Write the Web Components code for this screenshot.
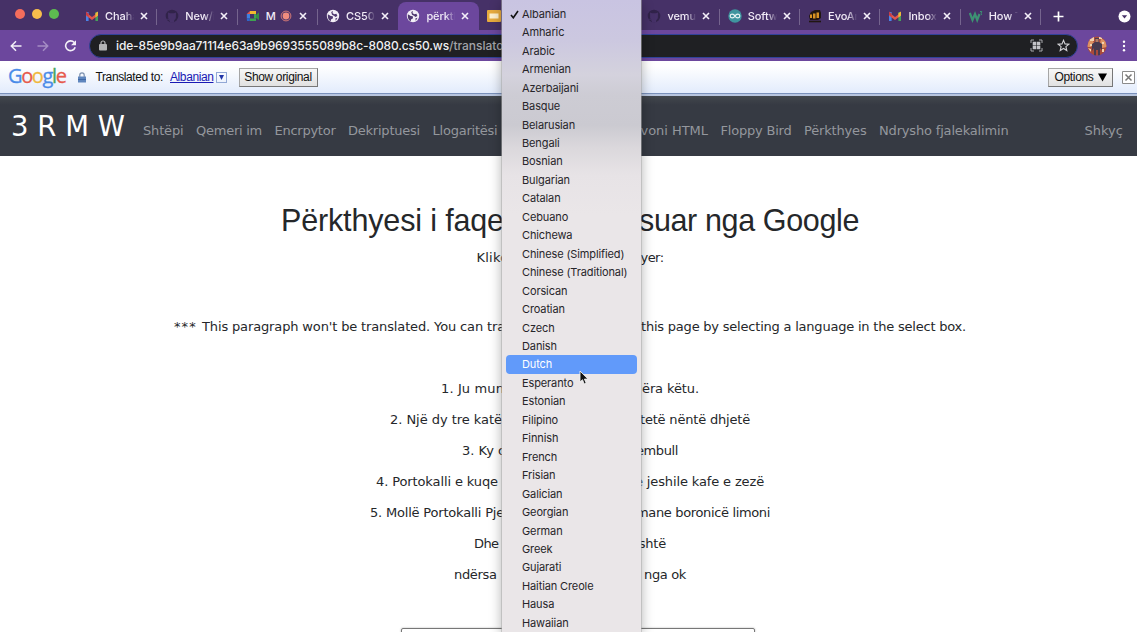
<!DOCTYPE html>
<html lang="sq"><head><meta charset="utf-8"><title>Përkthyes</title>
<style>
html,body{margin:0;height:100%;overflow:hidden;background:#fff}
body{font-family:"Liberation Sans",Arial,sans-serif;color:#212529}
</style></head><body>
<app-window></app-window>
<script>
const define=(name,html,setup)=>customElements.define(name,class extends HTMLElement{
  connectedCallback(){
    if(this.shadowRoot)return;
    const r=this.attachShadow({mode:'open'});
    r.innerHTML=typeof html==='function'?html(this):html;
    if(setup)setup(this,r);
  }
});

/* Text tracked out to a given width */
define('fit-text','<style>:host{display:inline-block;white-space:pre}span{white-space:pre}</style><span><slot></slot></span>',(el,r)=>{
  const w=+el.getAttribute('w'),s=r.querySelector('span');
  el.style.letterSpacing='0';
  const n=s.getBoundingClientRect().width;
  el.style.letterSpacing=((w-n)/el.textContent.length).toFixed(3)+'px';
  el.style.width=w+'px';
});

const icons={
 gmail:'<path d="M1 12V3h2.6v9z" fill="#4a83e8"/><path d="M10.4 12V3H13v9z" fill="#46a05a"/><path d="M1 3.500 7 8l6-4.500V6.500L7 11 1 6.500z" fill="#e2564b"/><path d="M10.400 4.300 13 2.500V6.500l-2.600 2z" fill="#f0b63b"/><path d="M1 2.500 3.600 4.400V8L1 6z" fill="#c83d45"/>',
 github:'<circle cx="7" cy="7" r="6.300" fill="#31234a"/><path d="M4.800 13.500v-2.200C3 10 3 8.500 3.100 6.500L3 3.500l2 .8h4l2-.8-.1 3C11 8.500 11 10 9.200 11.300v2.200z" fill="#463168"/><path d="M2.300 10.300q1.500 0 2.500 1.200" stroke="#463168" fill="none"/>',
 meet:'<path d="M.8 5H4v4.500H.8z" fill="#3f7fe0"/><path d="M4 2h6v3H4z" fill="#f1b82f"/><path d="M.8 9.500h3V12H1z" fill="#2f66c8"/><path d="M4 9.500h6V12H4z" fill="#3da251"/><path d="M10 6l3-2.800v8L10 9z" fill="#358c48"/><path d="M8 5h2v4.500H8z" fill="#3da251"/><path d="M.8 5 4 2v3z" fill="#e45748"/>',
 globe:'<circle cx="7" cy="7" r="6.200" fill="#f2eef6"/><path d="M1.800 5.200 4.800 7l2 .2.2 2-2 1.300-.3 1.900Q1.400 10.500 1.800 5.200M7 2l-.5 2 1.700 1.300 2.200-.6 1 2.200-2 1.200L8.300 7 6 5.800 5.200 3zM9.300 9.500l2.200-.8-1.700 3z" fill="#503a70"/>',
 slides:'<rect x="0" y="1" width="14" height="12" rx="1" fill="#e8ac3e"/><rect x="2.500" y="4.500" width="9" height="5" fill="#fff2cf"/>',
 arduino:'<circle cx="7" cy="7" r="6.700" fill="#3f959f"/><path d="M7 7C5.500 4.200 2.200 4.600 2.200 7s3.300 2.800 4.800 0 4.800-2.400 4.800 0S8.500 9.800 7 7z" fill="none" stroke="#e8f4f4" stroke-width="1.200"/>',
 evo:'<path d="M3 3 7 1h5l1 3v5l-3 2H2L1 7z" fill="#211611"/><path d="M2 5.500h2V9H2zM5 4.500h2.500v5H5zM8.500 3.500H11v5.500H8.500z" fill="#d99223"/><path d="M1 12.500h12" stroke="#211611" stroke-width="1.600"/>',
 w3:'<path d="M.8 4 3.500 11 6 5l2.200 6 2.300-6" fill="none" stroke="#3d9273" stroke-width="2.200"/><path d="M11 2.500h1.800L12 4.200q1.400.8 0 2" fill="none" stroke="#3d9273"/>'
};
define('tab-icon',el=>`<style>:host{display:block;width:14px;height:14px}svg{display:block}</style><svg width="14" height="14" viewBox="0 0 14 14">${icons[el.getAttribute('name')]}</svg>`);

define('browser-tab',el=>`<style>
:host{display:block;box-sizing:border-box;width:80.35px;flex:none;height:30px;padding-top:2px}
.t{height:28px;display:flex;align-items:center;padding-left:8px;box-sizing:border-box;position:relative}
:host([active]) .t{background:#6c479d;border-radius:8px 8px 0 0}
.l{margin-left:6px;width:30px;height:14px;overflow:hidden;white-space:nowrap;font:500 11px/14px Inter,sans-serif;letter-spacing:-.1px;color:#f1ebf7;-webkit-mask-image:linear-gradient(90deg,#000 65%,transparent 97%)}
:host([rec]) .l{width:14px;-webkit-mask-image:none}
.rec{display:none;flex:none;margin-right:6px}:host([rec]) .rec{display:block}
.x{flex:none;margin-left:5px}
:host([rec]) .x{margin-left:1px}
.s{position:absolute;right:0;top:7px;width:1px;height:16px;background:#75648e}
:host([nosep]) .s{display:none}
</style><div class="t"><tab-icon name="${el.getAttribute('icon')}"></tab-icon><div class="l"><slot></slot></div><svg class="rec" width="12" height="12"><circle cx="6" cy="6" r="4.900" fill="none" stroke="#d37876"/><circle cx="6" cy="6" r="3.400" fill="#f08d7e"/></svg><svg class="x" width="8" height="8"><path d="M1 1l6 6M7 1 1 7" stroke="#f4eff9" stroke-width="1.600"/></svg><i class="s"></i></div>`);

define('tab-strip',`<style>:host{display:flex;height:30px;background:#463167;align-items:stretch}
.lights{display:flex;gap:7px;padding-left:15px;width:61px;box-sizing:border-box;align-items:center;height:27px}
.lights i{width:10px;height:10px;border-radius:5px}
.end{flex:1;display:flex;justify-content:space-between;align-items:center;padding:3px 6px 0 12px}
</style><div class="lights"><i style="background:#f46d5c"></i><i style="background:#f7bd4c"></i><i style="background:#5dbb50"></i></div>
<div style="width:16px"></div>
<browser-tab icon="gmail">Chaha</browser-tab><browser-tab icon="github">New/i</browser-tab><browser-tab icon="meet" rec>M</browser-tab><browser-tab icon="globe" nosep>CS50</browser-tab><browser-tab icon="globe" active nosep>përktl</browser-tab><browser-tab icon="slides"></browser-tab><browser-tab icon="slides"></browser-tab><browser-tab icon="github">vemul</browser-tab><browser-tab icon="arduino">Softw</browser-tab><browser-tab icon="evo">EvoAr</browser-tab><browser-tab icon="gmail">Inbox</browser-tab><browser-tab icon="w3">How T</browser-tab>
<div class="end"><svg width="11" height="11"><path d="M5.500.5v10M.5 5.500h10" stroke="#fff" stroke-width="1.700"/></svg><svg width="13" height="13"><circle cx="6.500" cy="6.500" r="6" fill="#fff"/><path d="M3.800 5.200h5.400L6.500 8.500z" fill="#463167"/></svg></div>`);

define('address-bar',`<style>:host{display:flex;height:31px;background:#6c479d;align-items:center;box-sizing:border-box}
.n{display:flex;gap:15px;padding-left:10px;width:89px;box-sizing:border-box}
.pill{width:989px;height:24px;box-sizing:border-box;border:1px solid #31429a;border-radius:12px;background:#1f2023;display:flex;align-items:center;padding:0 7px 0 9px}
.u{margin-left:9px;color:#f0f0f2;font:500 12px Inter,sans-serif;flex:1;white-space:nowrap}.u .p{color:#a3a4a8}
.pill svg{flex:none}
</style><div class="n"><svg width="12" height="12"><path d="M11.500 6H1.500M6 1.300 1.300 6 6 10.700" fill="none" stroke="#f3eff8" stroke-width="1.500"/></svg><svg width="12" height="12"><path d="M.5 6h10M6 1.300 10.700 6 6 10.700" fill="none" stroke="#a48cc4" stroke-width="1.500"/></svg><svg width="13" height="12"><path d="M10.300 2.600A4.900 4.900 0 1 0 11.200 7.300" fill="none" stroke="#f3eff8" stroke-width="1.600"/><path d="M12 .3v4.900H7z" fill="#f3eff8"/></svg></div>
<div class="pill"><svg width="8" height="11"><rect x="0" y="4" width="8" height="6.500" rx="1" fill="#b2b3b6"/><path d="M2 4.500V3a2 2 0 0 1 4 0v1.500" fill="none" stroke="#b2b3b6" stroke-width="1.200"/></svg>
<div class="u"><fit-text w="333">ide-85e9b9aa71114e63a9b9693555089b8c-8080.cs50.ws</fit-text><fit-text w="59" class="p">/translator</fit-text></div>
<svg width="13" height="13" style="margin-right:14px"><path d="M1 4V1h3M9 1h3v3M12 9v3H9M4 12H1V9" fill="none" stroke="#a9a9ad"/><path d="M2.700 2.700h3.500v3.500H2.700zM6.800 2.700h3.500v3.500H6.800zM2.700 6.800h3.500v3.500H2.700zM6.800 6.800h3.500v3.500H6.800z" fill="#c4c4c8"/></svg>
<svg width="13" height="13"><path d="M6.500 1.300 8 4.900l3.900.3-3 2.500.9 3.800-3.300-2-3.300 2 .9-3.800-3-2.500L5 4.900z" fill="none" stroke="#d3d3d6" stroke-width="1.100"/></svg></div>
<svg style="margin-left:9px" width="20" height="20"><defs><clipPath id="c"><circle cx="10" cy="10" r="9.500"/></clipPath></defs><g clip-path="url(#c)"><path fill="#a94a3a" d="M0 0h20v20H0z"/><path d="M0 3h5l2 4-3 4H0zM14 2l6 4v5l-5 1-2-4z" fill="#dd9262"/><path d="M3 0h4v5H3zM12 0h3v3h-3zM1 12l3 1v3zM15 13h2v3h-2zM3 8h2v2H3zM15 6h2v2h-2z" fill="#f2d2ae"/><path d="M8 2h4v4l3 2v6l-2-2v8h-2v-6h-2v6H7v-8l-2 3V8l3-2z" fill="#463b50"/><path d="M8.500 3h3v3h-3z" fill="#b77b62"/></g></svg>
<svg style="margin-left:15px" width="4" height="12"><circle cx="2" cy="1.700" r="1.200" fill="#fff"/><circle cx="2" cy="6" r="1.200" fill="#fff"/><circle cx="2" cy="10.300" r="1.200" fill="#fff"/></svg>`);

define('translate-bar',`<style>:host{display:flex;align-items:center;height:35px;box-sizing:border-box;border-bottom:2px solid #b7c5df;box-shadow:inset 0 -1px #7990ba;background:linear-gradient(#fff 15%,#e3ecfc 95%);padding:0 3px 1px 8px;font-size:12px;color:#111}
.g{font:400 20px/28px "Open Sans",sans-serif;margin-top:-2px;-webkit-text-stroke:.3px}
.b{height:19px;box-sizing:border-box;border:1px solid #a6a6a6;border-right-color:#777;border-bottom-color:#777;background:linear-gradient(#f7f7f7,#e1e1e1);display:flex;align-items:center;justify-content:center}
.a{color:#1a1ab4;text-decoration:underline}
.d{width:9px;height:9px;border:1px solid #92a8d6;margin-left:2px;display:flex;align-items:center;justify-content:center}
</style><fit-text class="g" w="57.500"><span style="color:#4a8be8">G</span><span style="color:#e65a4c">o</span><span style="color:#f0b83d">o</span><span style="color:#4a8be8">g</span><span style="color:#49a65d">l</span><span style="color:#e65a4c">e</span></fit-text>
<svg style="margin-left:12px" width="8" height="11"><rect y="4.500" width="8" height="6" fill="#5f86be"/><path d="M1.800 5V3a2.200 2.200 0 0 1 4.400 0v2" fill="none" stroke="#7e92b0" stroke-width="1.200"/><path d="M0 7.500h8" stroke="#3f68a5"/></svg>
<fit-text w="67.500" style="margin-left:10px">Translated to:</fit-text><fit-text class="a" w="43.500" style="margin-left:7px">Albanian</fit-text><span class="d"><svg width="5" height="5"><path d="M0 0h5L2.500 5z" fill="#2135a8"/></svg></span>
<div class="b" style="width:79px;margin-left:12px"><fit-text w="67.500">Show original</fit-text></div><div style="flex:1"></div>
<div class="b" style="width:65px"><fit-text w="39">Options</fit-text><svg style="margin-left:4px" width="9" height="9"><path d="M0 .5h9L4.500 8.500z"/></svg></div>
<svg style="margin-left:9px;margin-right:-1px" width="13" height="13"><path d="M.5.500h12v12H.5z" fill="#fff" stroke="#8b8b8b"/><path d="M3.500 3.500l6 6M9.500 3.500l-6 6" stroke="#777" stroke-width="1.500"/></svg>`);

define('site-nav',`<style>:host{display:flex;height:60px;background:linear-gradient(#42474d,#363a43 9px);color:#94979d;font:13px "DejaVu Sans",sans-serif;align-items:center;padding:8px 14px 0 11px;box-sizing:border-box;margin-top:0}
.b{font-size:27.500px;color:#fff;margin-right:18px;margin-top:-8px}
.i{display:flex;gap:12.500px}.h{width:109px}
</style><fit-text class="b" w="114">3 R M W</fit-text>
<div class="i"><fit-text w="40.500">Shtëpi</fit-text><fit-text w="66">Qemeri im</fit-text><fit-text w="61">Encrpytor</fit-text><fit-text w="72">Dekriptuesi</fit-text><fit-text w="65">Llogaritësi</fit-text></div><div class="h"></div>
<div class="i" style="margin-left:auto"><fit-text w="88">Provoni HTML</fit-text><fit-text w="71">Floppy Bird</fit-text><fit-text w="62.500">Përkthyes</fit-text><fit-text w="129.500">Ndrysho fjalekalimin</fit-text></div><fit-text w="38.500" style="margin-left:76px">Shkyç</fit-text>`);

/* A centred line whose middle lies under the open menu */
define('text-line',el=>`<style>:host{display:flex;justify-content:space-between;align-items:center;margin:0 auto;height:31px;width:${el.getAttribute('w')}px}</style><slot></slot>`);
const line=(w,a,aw,b,bw,st='')=>`<text-line w="${w}" style="${st}"><fit-text w="${aw}">${a}</fit-text><fit-text w="${bw}">${b}</fit-text></text-line>`;
define('page-content',`<style>:host{display:flex;flex-direction:column;padding:44px 0 0 3px;font:13px "DejaVu Sans",sans-serif;color:#25272a}
.box{width:352px;height:30px;border:1px solid #777;border-radius:2px;margin:38px auto 0;position:relative;left:8px;flex:none;box-shadow:0 0 2px #aaa}
text-line{flex:none}</style>
${line(578,'Përkthyesi i faqes',238,'suar nga Google',220,'height:40px;margin-bottom:2px;font:30.5px Liberation Sans,Arial,sans-serif')}
${line(187,'Kliko',32,'yer:',23)}
<text-line w="792" style="margin-top:38px;margin-bottom:31px"><div><fit-text w="28">*** </fit-text><fit-text w="303">This paragraph won't be translated. You can tra</fit-text></div><fit-text w="325">this page by selecting a language in the select box.</fit-text></text-line>
${line(258,'1. Ju mun',63,'ëra këtu.',57)}
${line(360,'2. Një dy tre katë',112,'tetë nëntë dhjetë',110)}
${line(216,'3. Ky o',44,'embull',42)}
${line(388,'4. Portokalli e kuqe',122,'e jeshile kafe e zezë',129)}
${line(400,'5. Mollë Portokalli Pje',134,'mane boronicë limoni',134)}
${line(192,'Dhe',24.5,'është',35)}
${line(232,'ndërsa',42.5,'nga ok',42)}
<div class="box"></div>`);

define('menu-item',`<style>:host{display:flex;align-items:center;height:18.460px;margin:0 4px;padding-left:16px;border-radius:4px;font:11px Inter,sans-serif;letter-spacing:-.12px;color:#27252a;white-space:nowrap;position:relative}
:host([hot]){background:#619afa;color:#fff}
svg{display:none;position:absolute;left:4px;top:5px}:host([checked]) svg{display:block}</style><svg width="9" height="9"><path d="M1 5l2.300 2.800L8 1" fill="none" stroke="#111" stroke-width="1.600"/></svg><slot></slot>`);
const langs='Albanian,Amharic,Arabic,Armenian,Azerbaijani,Basque,Belarusian,Bengali,Bosnian,Bulgarian,Catalan,Cebuano,Chichewa,Chinese (Simplified),Chinese (Traditional),Corsican,Croatian,Czech,Danish,Dutch,Esperanto,Estonian,Filipino,Finnish,French,Frisian,Galician,Georgian,German,Greek,Gujarati,Haitian Creole,Hausa,Hawaiian'.split(',');
define('language-menu',`<style>:host{display:block;position:absolute;left:502px;top:0;width:139px;height:632px;overflow:hidden;padding-top:4.600px;box-sizing:border-box;background:linear-gradient(#c9c4e2 0,#ccc8e0 40px,#d4d2dd 75px,#cdccd4 95px,#cbcad1 125px,#dbd8dc 148px,#e7e3e6 175px,#eae6e8 215px);box-shadow:0 0 0 .5px #aaa,0 3px 12px #0005}</style>
${langs.map(l=>`<menu-item${l==='Albanian'?' checked':''}${l==='Dutch'?' hot':''}>${l}</menu-item>`).join('')}`);

define('mouse-pointer','<style>:host{display:block;position:absolute;left:579px;top:370px}</style><svg width="10" height="15"><path d="M1 1v11l2.500-2.300L5.200 14l2-.9-1.800-4H9z" fill="#111" stroke="#eee" stroke-width=".9"/></svg>');

define('app-window','<style>:host{display:block;position:relative;width:1137px;height:632px;overflow:hidden;background:#fff}</style><tab-strip></tab-strip><address-bar></address-bar><translate-bar></translate-bar><site-nav></site-nav><page-content></page-content><language-menu></language-menu><mouse-pointer></mouse-pointer>');
</script></body></html>
